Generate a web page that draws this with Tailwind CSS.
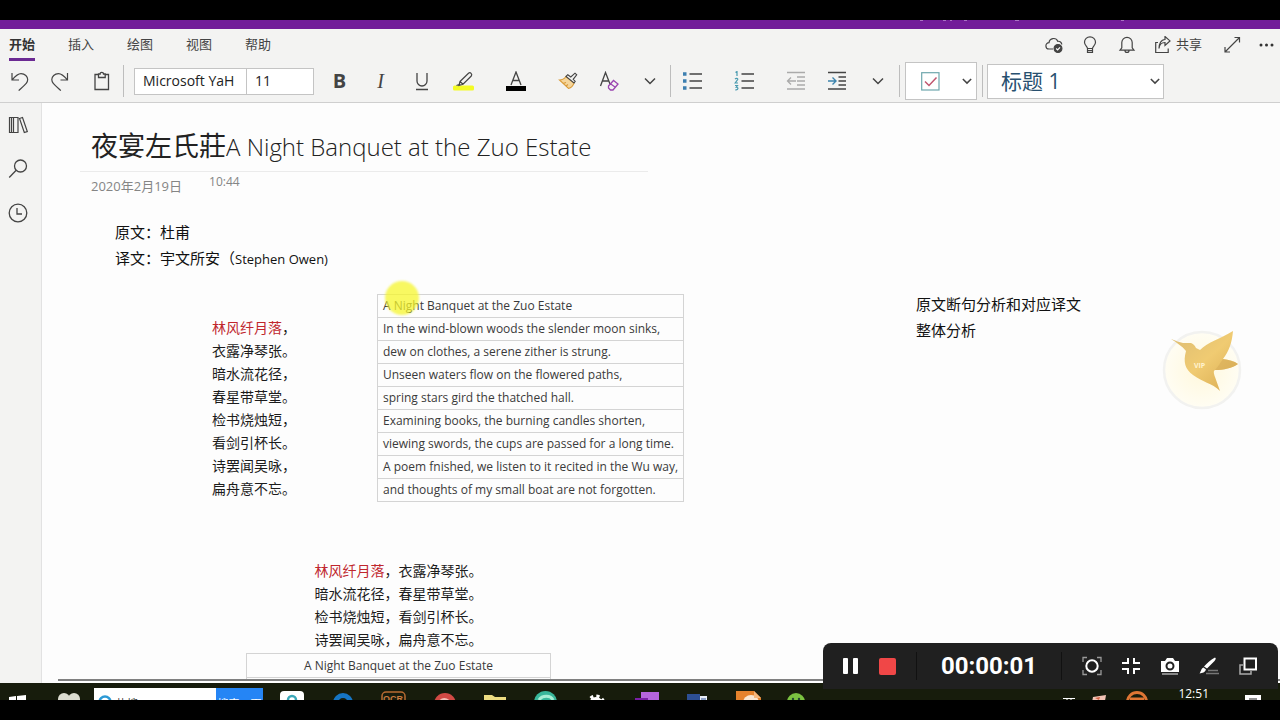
<!DOCTYPE html>
<html lang="zh-CN">
<head>
<meta charset="utf-8">
<meta name="viewport" content="width=device-width, initial-scale=1">
<title>夜宴左氏莊</title>
<script src="https://cdn.jsdelivr.net/npm/@tailwindcss/browser@4"></script>
</head>
<body class="flex h-screen flex-col overflow-hidden bg-black py-5 font-['Open_Sans','Noto_Sans_CJK_SC',sans-serif] text-[#222]">
<div class="relative flex min-h-0 flex-1 flex-col">

  <!-- window title bar -->
  <div class="h-[9px] shrink-0 bg-[#721c99]">
    <svg class="ml-auto block h-1 w-[380px]" viewBox="0 0 380 4" stroke="#a970c4" stroke-width="1"><path d="M20 .5h3M43 .5h3M50 .5h2M64 .5h3M115 .5h4M221 .5h3"/></svg>
  </div>

  <!-- ribbon -->
  <header class="shrink-0 border-b border-[#cfcfcf] bg-[#f3f3f2] text-[#444]">
    <div class="flex h-8 items-center justify-between pl-[9px] pr-[5px]">
      <nav class="flex gap-[33px] text-[13px] leading-7">
        <a href="#" class="border-b-3 border-[#6b2a93] font-bold text-[#333]">开始</a>
        <a href="#" class="border-b-3 border-transparent">插入</a>
        <a href="#" class="border-b-3 border-transparent">绘图</a>
        <a href="#" class="border-b-3 border-transparent">视图</a>
        <a href="#" class="border-b-3 border-transparent">帮助</a>
      </nav>
      <div class="flex items-center text-[13px]">
        <button aria-label="同步" class="mr-[18px]"><svg class="size-[18px]" viewBox="0 0 18 18" fill="none" stroke="#444" stroke-width="1.2"><path d="M8 13H4.200a3.200 3.200 0 0 1-.2-6.400 4.600 4.600 0 0 1 8.800-1.300 3.500 3.500 0 0 1 4 3.200"/><circle cx="13" cy="12.500" r="3.900" fill="#444"/><path d="M11.200 12.500l1.400 1.400 2.400-2.600" stroke="#fff"/></svg></button>
        <button aria-label="提示" class="mr-[19px]"><svg class="size-[18px]" viewBox="0 0 18 18" fill="none" stroke="#444" stroke-width="1.200"><path d="M6.500 12.500c0-2-3-3-3-6.200a5.500 5.500 0 0 1 11 0c0 3.200-3 4.200-3 6.200zM6.500 12.500v3.800h5v-3.800M6.500 14.500h5"/></svg></button>
        <button aria-label="通知" class="mr-[18px]"><svg class="size-[18px]" viewBox="0 0 18 18" fill="none" stroke="#444" stroke-width="1.200"><path d="M2 14.200h14l-1.800-2.400V6.600a5.200 5.200 0 0 0-10.400 0v5.200zM7 14.400a2 2 0 0 0 4 0"/></svg></button>
        <button class="mr-[21px] flex items-center gap-1"><svg class="size-[18px]" viewBox="0 0 18 18" fill="none" stroke="#444" stroke-width="1.200"><path d="M4 6.500H1.700v10h12.500v-4M5 12.500c.4-4 2.500-6 6-6V9.500l5-4.600-5-4.400v3C7 3.500 5 8 5 12.500z"/></svg>共享</button>
        <button aria-label="全屏" class="mr-[18px]"><svg class="size-[18px]" viewBox="0 0 18 18" fill="none" stroke="#444" stroke-width="1.200"><path d="M2 16L16.500 1.500M11.500 1.500h5v5M2 11v5h5"/></svg></button>
        <button aria-label="更多"><svg class="h-[18px] w-4" viewBox="0 0 16 18" fill="#333"><circle cx="2" cy="9" r="1.500"/><circle cx="7.500" cy="9" r="1.500"/><circle cx="13" cy="9" r="1.500"/></svg></button>
      </div>
    </div>

    <div class="flex h-10 items-center">
      <button aria-label="撤消" class="flex w-[39px] justify-center"><svg class="size-5" viewBox="0 0 20 20" fill="none" stroke="#444" stroke-width="1.200"><path d="M2 2v7h7M2.300 8.700C5 5.500 7.500 2.600 11 2.600c4 0 6.700 3 6.700 6 0 3-2 4.500-9 11"/></svg></button>
      <button aria-label="恢复" class="flex w-[41px] justify-center"><svg class="size-5" viewBox="0 0 20 20" fill="none" stroke="#444" stroke-width="1.200"><path d="M17.500 2v7h-7M17.200 8.700C14.500 5.500 12 2.600 8.500 2.600c-4 0-6.700 3-6.700 6 0 3 2 4.500 9 11"/></svg></button>
      <button aria-label="粘贴" class="flex w-[43px] justify-center"><svg class="size-5" viewBox="0 0 20 20" fill="none" stroke="#444" stroke-width="1.300"><path d="M7 3.500H3v15h13.500v-15h-4M6.500 6.500h6.700V3h-1.700a1.700 1.700 0 0 0-3.400 0H6.500z"/></svg></button>
      <span class="h-8 w-px bg-[#bdbdbd]"></span>
      <div class="ml-2.5 flex h-[27px] border border-[#c4c4c4] bg-white text-sm text-[#222]">
        <input aria-label="字体" value="Microsoft YaH" class="w-28 border-r border-[#c4c4c4] pl-2 outline-none">
        <input aria-label="字号" value="11" class="w-[66px] pl-2 outline-none">
      </div>
      <button aria-label="加粗" class="ml-[5px] w-[41px] text-center text-xl font-bold">B</button>
      <button aria-label="倾斜" class="w-[41px] text-center font-['Liberation_Serif',serif] text-xl italic">I</button>
      <button aria-label="下划线" class="flex w-[41px] justify-center"><svg class="size-5" viewBox="0 0 20 20" fill="none" stroke="#444" stroke-width="1.300"><path d="M5 2v8a5 5 0 0 0 10 0V2M4 18.500h12"/></svg></button>
      <button aria-label="突出显示" class="flex w-[42px] justify-center"><svg class="h-5 w-6" viewBox="0 0 24 20" fill="none" stroke="#444" stroke-width="1.200"><rect x="2" y="14.500" width="21" height="5" rx="1.500" fill="#f3fb25" stroke="none"/><path d="M9 10.500l8.500-8.300a2 2 0 0 1 2.800 2.800L12 13.200l-4 1.200zM9 10.500l3 2.700M8 13.500l-2.500 1"/></svg></button>
      <button aria-label="字体颜色" class="ml-[11px] flex w-[41px] justify-center"><svg class="h-5 w-5" viewBox="0 0 20 20" fill="none" stroke="#444" stroke-width="1.300"><rect x="0" y="15" width="20" height="5" fill="#000" stroke="none"/><path d="M5 14L10 1l5 13M6.700 9.500h6.600"/></svg></button>
      <button aria-label="格式刷" class="ml-[11px] flex w-[41px] justify-center"><svg class="h-5 w-5" viewBox="0 0 20 20" fill="none" stroke="#444" stroke-width="1.100"><path d="M8 5.500l8 6.500c-1 3-3.500 5-5.500 5.500L1.500 9c3 0 5-1.500 6.500-3.500z" fill="#f5d59b" stroke="#d99a38"/><path d="M5 12.500l3-1M8 15l2-1.500" stroke="#d99a38"/><path d="M8 5.500l1.800-1.800 3 2.300L17 2.200l1.700 1.600-3.500 4.500 2 2L16 12z" fill="#f3f3f2"/></svg></button>
      <button aria-label="清除格式" class="flex w-[41px] justify-center"><svg class="h-5 w-5" viewBox="0 0 20 20" fill="none" stroke="#444" stroke-width="1.300"><path d="M1.500 15L6.500 1.500 11 13M3.400 10h6.200"/><path d="M9.500 15l5-5.500 4.500 3.500-5 6h-2.500L9.500 17zM11.500 12.800l4.800 3.500" stroke="#9b45b0"/></svg></button>
      <button aria-label="更多字体格式" class="flex w-[41px] justify-center"><svg class="h-3 w-3" viewBox="0 0 12 12" fill="none" stroke="#444" stroke-width="1.500"><path d="M1 3.500l5 5 5-5"/></svg></button>
      <span class="h-8 w-px bg-[#bdbdbd]"></span>
      <button aria-label="项目符号" class="flex w-[41px] justify-center"><svg class="h-5 w-5" viewBox="0 0 20 20" stroke="#444" stroke-width="1.300"><path d="M7.500 3H20M7.500 10H20M7.500 17H20"/><path d="M1 3h3.500M1 10h3.500M1 17h3.500" stroke="#3d7fb0" stroke-width="3.500"/></svg></button>
      <button aria-label="编号" class="ml-[11px] flex w-[41px] justify-center"><svg class="h-5 w-5" viewBox="0 0 20 20" fill="none" stroke="#444" stroke-width="1.300"><path d="M7.500 3H20M7.500 10H20M7.500 17H20"/><path d="M1.500 1.500L3 .5V5M1 8c1-1 3-.8 2.700.5L1.200 12H4M1 14.500h2.500L2.200 16.200c2.500 0 2.300 3-.9 2.600" stroke="#4a9bb0" stroke-width="1.200"/></svg></button>
      <button aria-label="减少缩进" class="ml-[11px] flex w-[41px] justify-center"><svg class="h-5 w-5" viewBox="0 0 20 20" fill="none" stroke="#aaa" stroke-width="1.300"><path d="M1 1.500h18M11 6h8M11 10h8M11 14h8M1 18h18M10 10H1.500M5 6.500L1.500 10 5 13.500"/></svg></button>
      <button aria-label="增加缩进" class="flex w-[41px] justify-center"><svg class="h-5 w-5" viewBox="0 0 20 20" fill="none" stroke="#444" stroke-width="1.400"><path d="M1 1.500h18M11.500 6H19M11.500 10H19M11.500 14H19M1 18h18"/><path d="M1 10h8M5.500 6.500L9 10l-3.500 3.500" stroke="#3d84ad"/></svg></button>
      <button aria-label="更多段落格式" class="flex w-[42px] justify-center"><svg class="h-3 w-3" viewBox="0 0 12 12" fill="none" stroke="#444" stroke-width="1.500"><path d="M1 3.500l5 5 5-5"/></svg></button>
      <span class="h-8 w-px bg-[#bdbdbd]"></span>
      <div class="ml-[5px] flex h-[38px] w-[72px] items-center justify-between border border-[#c4c4c4] bg-white pl-[15px] pr-1">
        <button aria-label="待办事项"><svg class="size-[19px]" viewBox="0 0 19 19" fill="none"><rect x=".7" y=".7" width="17.300" height="17.300" stroke="#6fa7ad" stroke-width="1.200"/><path d="M4 9.500l4 4 7.500-8" stroke="#c0566f" stroke-width="1.500"/></svg></button>
        <button aria-label="更多标记"><svg class="size-2.5" viewBox="0 0 12 12" fill="none" stroke="#444" stroke-width="1.800"><path d="M1 3.500l5 5 5-5"/></svg></button>
      </div>
      <span class="ml-[5px] h-8 w-px bg-[#bdbdbd]"></span>
      <div class="relative ml-1">
        <select aria-label="样式" class="h-[35px] w-[177px] appearance-none border border-[#c4c4c4] bg-white pl-[13px] text-[21px] leading-8 text-[#28506f] outline-none"><option>标题 1</option><option>标题 2</option></select>
        <svg class="pointer-events-none absolute right-1 top-3 size-2.5" viewBox="0 0 12 12" fill="none" stroke="#444" stroke-width="1.800"><path d="M1 3.500l5 5 5-5"/></svg>
      </div>
    </div>
    <div class="h-px"></div>
  </header>

  <!-- workspace -->
  <div class="flex min-h-0 flex-1">
    <aside class="flex w-[42px] shrink-0 flex-col items-center gap-6 border-r border-[#e2e2e2] bg-[#f3f3f2] pr-1.5 pt-3">
      <button aria-label="笔记本"><svg class="block size-5" viewBox="0 0 20 20" fill="none" stroke="#444" stroke-width="1.200"><path d="M1.500 2.500h4v15h-4zM5.500 2.500h4.500v15H5.500zM11.500 3.500l3-1 4.800 14-3 1zM3.500 3v14"/></svg></button>
      <button aria-label="搜索"><svg class="block size-5" viewBox="0 0 20 20" fill="none" stroke="#444" stroke-width="1.300"><circle cx="12.500" cy="7" r="6"/><path d="M8.200 11.200L1.200 18.500"/></svg></button>
      <button aria-label="最近的笔记"><svg class="block size-5" viewBox="0 0 20 20" fill="none" stroke="#444" stroke-width="1.300"><circle cx="10" cy="10" r="8.800"/><path d="M9 5v6h5"/></svg></button>
    </aside>

    <!-- note page: containers sit freely on the canvas -->
    <main class="relative min-w-0 flex-1 overflow-hidden bg-[#fdfdfd]">
      <div class="ml-[38px] w-[568px] border-b border-[#ebebeb] pl-[11px] pt-[25px]">
        <h1 class="h-[43px] whitespace-nowrap text-2xl leading-9 font-light text-[#222]"><span class="text-[27px] font-normal">夜宴左氏莊</span>A Night Banquet at the Zuo Estate</h1>
      </div>
      <div class="ml-[49px] flex gap-[27px] text-xs leading-5 text-[#858585]"><span class="pt-1 text-[13px]">2020年2月19日</span><span>10:44</span></div>

      <div class="absolute left-[73px] top-[116px] text-[15px] leading-[26px] text-[#111]">
        <p>原文：杜甫</p>
        <p>译文：宇文所安（<span class="text-[13px]">Stephen Owen)</span></p>
      </div>

      <div class="absolute left-[170px] top-[213px] text-sm leading-[23px] text-[#1c1c1c]">
        <p><span class="text-[#c0272d]">林风纤月落</span>，</p>
        <p>衣露净琴张。</p>
        <p>暗水流花径，</p>
        <p>春星带草堂。</p>
        <p>检书烧烛短，</p>
        <p>看剑引杯长。</p>
        <p>诗罢闻吴咏，</p>
        <p>扁舟意不忘。</p>
      </div>

      <table class="absolute left-[335px] top-[191px] w-[306px] border-collapse whitespace-nowrap text-xs leading-[22px] text-[#3a3a3a] [&_td]:border [&_td]:border-[#d4d4d4] [&_td]:px-[5px] [&_td]:py-0 [&_td]:leading-[22px]">
        <tr><td>A Night Banquet at the Zuo Estate</td></tr>
        <tr><td>In the wind-blown woods the slender moon sinks,</td></tr>
        <tr><td>dew on clothes, a serene zither is strung.</td></tr>
        <tr><td>Unseen waters flow on the flowered paths,</td></tr>
        <tr><td>spring stars gird the thatched hall.</td></tr>
        <tr><td>Examining books, the burning candles shorten,</td></tr>
        <tr><td>viewing swords, the cups are passed for a long time.</td></tr>
        <tr><td>A poem fnished, we listen to it recited in the Wu way,</td></tr>
        <tr><td>and thoughts of my small boat are not forgotten.</td></tr>
      </table>
      <span class="absolute left-[343px] top-[178px] size-[34px] rounded-full bg-[#f6f62c]/75 blur-[1px]"></span>

      <div class="absolute left-[874px] top-[188px] text-[15px] leading-[26px] text-[#111]">
        <p>原文断句分析和对应译文</p>
        <p>整体分析</p>
      </div>

      <div class="absolute left-[204px] top-[456px] w-[305px]">
        <div class="text-center text-sm leading-[23px] text-[#1c1c1c]">
          <p><span class="text-[#c0272d]">林风纤月落</span>，衣露净琴张。</p>
          <p>暗水流花径，春星带草堂。</p>
          <p>检书烧烛短，看剑引杯长。</p>
          <p>诗罢闻吴咏，扁舟意不忘。</p>
        </div>
        <table class="mt-0.5 w-full border-collapse text-center text-xs text-[#3a3a3a] [&_td]:border [&_td]:border-[#d4d4d4] [&_td]:leading-[23px]">
          <tr><td>A Night Banquet at the Zuo Estate</td></tr>
          <tr><td class="h-6"></td></tr>
        </table>
      </div>

      <div class="absolute bottom-0 left-4 right-0 h-1 border-t-2 border-[#808080] bg-white"></div>

      <!-- floating bird badge -->
      <svg class="absolute right-[38px] top-[227px] size-20" viewBox="0 0 80 80">
        <defs><linearGradient id="bird" x1="0" y1="0" x2="1" y2="1"><stop offset="0" stop-color="#dcbc72"/><stop offset=".5" stop-color="#f0cb72"/><stop offset="1" stop-color="#d8a94e"/></linearGradient>
        <radialGradient id="disc"><stop offset="0" stop-color="#fff8dc"/><stop offset="1" stop-color="#fffdf3"/></radialGradient></defs>
        <circle cx="40" cy="40" r="38" fill="url(#disc)" stroke="#f2f2f0" stroke-width="2.500"/>
        <path d="M9 9c5 2 8 3 12 4h8c3 1 4 3 5 5l4 2c8-8 20-11 33-19-1 12-4 20-10 28 6 1 11 2 15 5-6 4-14 6-23 6-2 1-1 4 0 7l5 14C50 53 40 52 31 45c-8-6-10-13-7-24-4-5-9-8-15-12z" fill="url(#bird)"/>
        <path d="M53 40c3-3 5-7 8-11 6 1 11 2 15 5-6 4-14 6-23 6z" fill="#d6ac58" opacity=".55"/>
        <text x="32" y="38" font-size="7" font-weight="700" fill="#fff3cf" font-family="Open Sans, sans-serif">VIP</text>
      </svg>
    </main>
  </div>

  <!-- taskbar, cut off at the lower edge -->
  <footer class="flex h-[17px] shrink-0 items-start overflow-hidden bg-[#171c0c] text-white">
    <svg class="ml-2 mt-3 h-5 w-[18px] shrink-0" viewBox="0 0 18 20" fill="#fff"><path d="M1 2l7-1v9H1zM9 1l9-1v10H9z"/></svg>
    <svg class="ml-8 mt-2.5 h-4 w-[22px] shrink-0" viewBox="0 0 22 16" fill="#dcddd0"><circle cx="6" cy="6" r="6"/><circle cx="16" cy="6" r="6"/></svg>
    <div class="ml-3.5 mt-[5px] flex h-7 w-[169px] shrink-0 bg-white">
      <svg class="ml-1 mt-1.5 h-4 w-[14px]" viewBox="0 0 14 16" fill="none" stroke="#2c9ad6" stroke-width="2.500"><circle cx="7" cy="8" r="5.500"/><path d="M2 8h10"/></svg>
      <span class="ml-1 mt-1.5 text-[11px] leading-5 text-[#333]">热搜</span>
      <button class="ml-auto flex w-[47px] items-start justify-center bg-[#2585f5] pt-1 text-[11px] leading-6 whitespace-nowrap">搜索一下</button>
    </div>
    <svg class="ml-[17px] mt-2 h-5 w-6 shrink-0" viewBox="0 0 24 20"><rect width="24" height="20" rx="4" fill="#fff"/><path d="M8 9a4 4 0 0 1 8 0" fill="none" stroke="#3aa8b8" stroke-width="2.500"/></svg>
    <svg class="ml-[29px] mt-2.5 size-5 shrink-0" viewBox="0 0 20 20" fill="none" stroke="#1675c4" stroke-width="5"><circle cx="10" cy="10" r="7.500"/></svg>
    <svg class="ml-[28px] mt-2 h-5 w-[25px] shrink-0" viewBox="0 0 25 20"><rect x="1" y="1" width="23" height="22" rx="4" fill="none" stroke="#b86b32" stroke-width="1.500"/><text x="2" y="11" font-size="9" font-weight="700" fill="#c87b40" font-family="Liberation Sans, sans-serif">OCR</text></svg>
    <svg class="ml-[28px] mt-2.5 h-5 w-[22px] shrink-0" viewBox="0 0 22 20"><circle cx="11" cy="11" r="11" fill="#d24a45"/><path d="M6 8q4-4 9 0" stroke="#f3c0b8" stroke-width="2" fill="none"/></svg>
    <svg class="ml-[28px] mt-3 h-5 w-[22px] shrink-0" viewBox="0 0 22 20"><path d="M0 0h8l3 2h11v18H0z" fill="#ecdc82"/></svg>
    <svg class="ml-[28px] mt-2 size-[23px] shrink-0" viewBox="0 0 23 23"><circle cx="11.500" cy="11.500" r="11.500" fill="#39b79b"/><path d="M5 9c3-5 12-5 14 0" stroke="#a8efd6" stroke-width="3" fill="none"/></svg>
    <svg class="ml-[29px] mt-[11px] size-5 shrink-0" viewBox="0 0 20 20" fill="none" stroke="#fff"><circle cx="10" cy="10" r="5.500" stroke-width="3"/><circle cx="10" cy="10" r="8" stroke-width="3" stroke-dasharray="3.200 3.100"/></svg>
    <svg class="ml-[29px] mt-[9px] h-5 w-6 shrink-0" viewBox="0 0 24 20"><path d="M6 0h18v20H6z" fill="#b565dc"/><path d="M0 6h13v14H0z" fill="#7a1fa5"/></svg>
    <svg class="ml-[28px] mt-[11px] h-5 w-5 shrink-0" viewBox="0 0 20 20"><path d="M0 0h13v20H0z" fill="#2d4f94"/><path d="M13 2h7v18h-7z" fill="#e9eef7"/><path d="M14 5h5" stroke="#2d4f94"/></svg>
    <svg class="ml-[29px] mt-2 h-5 w-[25px] shrink-0" viewBox="0 0 25 20"><path d="M0 0h18l7 7v13H0z" fill="#e5822c"/><circle cx="15" cy="12" r="8" fill="#f8e6d2"/><path d="M18 0l7 7h-7z" fill="#f5b77c"/></svg>
    <svg class="ml-[26px] mt-2.5 h-5 w-[18px] shrink-0" viewBox="0 0 18 20"><circle cx="9" cy="9" r="9" fill="#7bc241"/><circle cx="6" cy="6" r="1.200" fill="#243"/><circle cx="12" cy="6" r="1.200" fill="#243"/></svg>
    <div class="ml-auto flex shrink-0 items-start pr-[19px]">
      <svg class="mr-4 mt-[15px] h-2 w-3" viewBox="0 0 12 8" stroke="#fff" fill="none"><path d="M0 .5h12M4 0v6M8 0v6"/></svg>
      <svg class="mr-5 mt-3 h-3 w-[15px]" viewBox="0 0 15 12"><path d="M2 2l13-2-2 12H0z" fill="#f3c4b5"/><path d="M4 3l5-1-1 3z" fill="#cf6042"/></svg>
      <svg class="mr-[30px] mt-2 size-[22px]" viewBox="0 0 22 22" fill="none" stroke="#df7634" stroke-width="3"><circle cx="11" cy="11" r="9.500"/><path d="M4 8h14"/></svg>
      <span class="mr-[36px] mt-px text-xs leading-5">12:51</span>
      <svg class="mt-3 h-3 w-4" viewBox="0 0 16 12"><path d="M0 0h16v12H0z" fill="#fff"/><path d="M4 4h8" stroke="#222"/></svg>
    </div>
  </footer>

  <!-- screen recorder bar -->
  <div class="absolute bottom-[11px] right-0.5 flex h-[46px] w-[455px] items-center rounded-t-lg bg-[#202020] text-white">
    <button aria-label="暂停" class="ml-5"><svg class="block h-5 w-4" viewBox="0 0 16 20" fill="#fff"><rect x="0" y="2" width="5" height="16" rx="1"/><rect x="10" y="2" width="5" height="16" rx="1"/></svg></button>
    <button aria-label="停止" class="ml-5 size-[17px] rounded-xs bg-[#f04747]"></button>
    <span class="ml-5 h-7 w-px bg-[#111]"></span>
    <time class="ml-6 w-[94px] whitespace-nowrap font-['Roboto',sans-serif] text-2xl leading-8 font-bold">00:00:01</time>
    <span class="ml-[26px] h-7 w-px bg-[#111]"></span>
    <div class="ml-auto mr-5 flex items-center gap-[19px]">
      <button aria-label="区域"><svg class="block size-5" viewBox="0 0 20 20" fill="none" stroke="#fff"><circle cx="10" cy="10" r="5.700" stroke-width="2"/><path d="M1 6V1.500h4M15 1.500h4V6M19 14v4.500h-4M5 18.500H1V14" stroke="#999" stroke-width="1.300"/></svg></button>
      <button aria-label="缩小"><svg class="block size-5" viewBox="0 0 20 20" fill="none" stroke="#fff" stroke-width="2"><path d="M1 7h6V2M13 2v5h6M19 13h-6v5M7 18v-5H1"/></svg></button>
      <button aria-label="截图"><svg class="block size-5" viewBox="0 0 20 20"><path d="M1 5h4l2-3h6l2 3h4v11H1z" fill="#fff"/><circle cx="10" cy="10" r="3.500" fill="none" stroke="#202020" stroke-width="2"/><path d="M2 18h16" stroke="#aaa" stroke-width="1.500"/></svg></button>
      <button aria-label="画笔"><svg class="block size-5" viewBox="0 0 20 20" fill="#fff"><path d="M16 1.500c1.500 1 .5 2-.5 3.500L8 12.500 5 10.500C8 7 12 3.500 16 1.500zM4.500 11.500l2.500 2c-1 3-3.500 3.500-6.500 4 1.500-2 1.500-5 4-6z"/><path d="M9 14.500h10M7 17.500h13" stroke="#777" stroke-width="1.300"/></svg></button>
      <button aria-label="窗口"><svg class="block size-5" viewBox="0 0 20 20" fill="none"><path d="M5 9H2v9h11v-3" stroke="#aaa" stroke-width="1.500"/><rect x="6.500" y="2.500" width="11.500" height="11" stroke="#fff" stroke-width="2"/></svg></button>
    </div>
  </div>
</div>
</body>
</html>
